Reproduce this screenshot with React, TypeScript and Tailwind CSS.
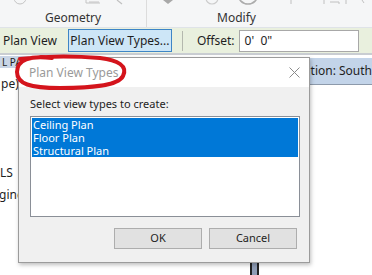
import React from 'react';

const font = { fontFamily: '"Noto Sans", "Open Sans", sans-serif' };

const RibbonIcons = () => (
  <svg width="372" height="6" className="block" viewBox="0 0 372 6">
    <circle cx="20" cy="-2" r="6" fill="none" stroke="#c4c4c4" strokeWidth="1" />
    <path d="M86 0v3h14M89 2h10" stroke="#c4c4c4" strokeWidth="1" fill="none" />
    <path d="M117 0l5 4" stroke="#c0c0c0" strokeWidth="1.2" />
    <path d="M163 0l5 4l5-4z" fill="#a8a8a8" />
    <circle cx="212" cy="-2" r="6" fill="none" stroke="#cccccc" strokeWidth="1.2" />
    <circle cx="248" cy="-6" r="10" fill="none" stroke="#acacac" strokeWidth="1.6" />
    <path d="M291 0v4M324 0v4M330 2h9v2M346 0v4M362 0l2 3" stroke="#c0c0c0" strokeWidth="1" fill="none" />
  </svg>
);

const App = () => {
  return (
    <div className="relative w-[372px] h-[275px] overflow-hidden bg-white text-[11px] text-[#1e1e1e]" style={font}>
      {/* ribbon */}
      <div className="h-[28px] bg-[#f5f6f7] border-b border-[#dfe3e8]">
        <RibbonIcons />
        <div className="flex h-[21px]">
          <div className="w-[147px] border-r border-[#dcdcdc] -mt-[6px] pt-[10px] text-center text-[12px] leading-[16px] text-[#333]">
            Geometry
          </div>
          <div className="flex-1 -mt-[6px] pt-[10px] text-center text-[12px] leading-[16px] text-[#333] pr-[46px]">Modify</div>
        </div>
      </div>

      {/* options bar */}
      <div className="flex items-center h-[27px] bg-[#e9f0de] border-b-2 border-[#c9cdd2]">
        <span className="ml-[3px] text-[12px]">Plan View</span>
        <div className="ml-[11px] h-[23px] w-[104px] flex items-center justify-center bg-[#cde6f7] border border-[#3d85c6] text-[12px]">
          Plan View Types...
        </div>
        <div className="ml-[10px] w-px h-[20px] bg-[#b4b8ae]" />
        <span className="ml-[14px] text-[12px]">Offset:</span>
        <div className="ml-[4px] h-[22px] w-[120px] flex items-center pl-[5px] bg-white border border-[#a8a8a8] text-[12px]">
          0'&nbsp;&nbsp;0"
        </div>
      </div>

      {/* background panels */}
      <div className="flex h-[220px]">
        <div className="w-[256px] flex flex-col whitespace-nowrap text-[12px]">
          <div className="h-[12px] mt-[1px] w-[60px] bg-[#c9d5e6] text-[10px] leading-[12px] pl-[2px]">L PA</div>
          <div className="mt-[9px] pl-px leading-[14px]">pe)</div>
          <div className="mt-[75px] leading-[14px]">LS</div>
          <div className="mt-[8px] -ml-px leading-[14px]">gines</div>
        </div>
        <div className="w-[10px] flex flex-col">
          <div className="flex-1" />
          <div className="h-[12px] w-[9px] ml-px border-x-2 border-[#222] bg-[#8e9cb5]" />
        </div>
        <div className="flex-1 flex flex-col">
          <div className="h-[27px] mt-[3px] bg-[#c3d4e9] border-b border-[#8d9aab] flex items-center pl-[22px] text-[12px] whitespace-nowrap">
            Elevation: South
          </div>
          <div className="flex-1 bg-white" />
        </div>
      </div>

      {/* dialog window */}
      <div className="absolute left-[18px] top-[57px] w-[292px] h-[206px] flex flex-col bg-[#f0f0f0] border border-[#9b9b9b] shadow-[1px_2px_4px_rgba(0,0,0,0.25)]">
        <div className="h-[29px] bg-white flex items-center justify-between pl-[10px] pr-[9px]">
          <span className="text-[12px] text-[#9a9a9a]">Plan View Types</span>
          <svg width="11" height="11" viewBox="0 0 11 11">
            <path d="M0.5 0.5l10 10M10.5 0.5l-10 10" stroke="#8a8a8a" strokeWidth="1" />
          </svg>
        </div>
        <div className="flex-1 flex flex-col px-[11px]">
          <div className="mt-[10px] text-[11px] leading-[14px]">Select view types to create:</div>
          <div className="mt-[5px] h-[101px] w-[270px] bg-white border border-[#8a8f97] p-px">
            {['Ceiling Plan', 'Floor Plan', 'Structural Plan'].map((item) => (
              <div key={item} className="h-[13px] leading-[13px] bg-[#0078d7] text-white text-[11px] pl-px">
                {item}
              </div>
            ))}
          </div>
          <div className="mt-[11px] flex justify-end gap-[7px] pr-px">
            <div className="w-[88px] h-[21px] flex items-center justify-center bg-[#e1e1e1] border border-[#adadad] text-[11px]">OK</div>
            <div className="w-[88px] h-[21px] flex items-center justify-center bg-[#e1e1e1] border border-[#adadad] text-[11px]">Cancel</div>
          </div>
        </div>
      </div>

      {/* red hand-drawn circle */}
      <svg className="absolute left-0 top-[50px] pointer-events-none" width="140" height="45" viewBox="0 0 140 45">
        <path
          d="M52 8 C30 5 17 10 17 22 C17 34 30 38 60 38 C90 38 118 36 123 26 C128 16 118 10 100 8 C75 6 45 6 20 9"
          fill="none"
          stroke="#d4141c"
          strokeWidth="4"
          strokeLinecap="round"
        />
      </svg>
    </div>
  );
};

export default App;
